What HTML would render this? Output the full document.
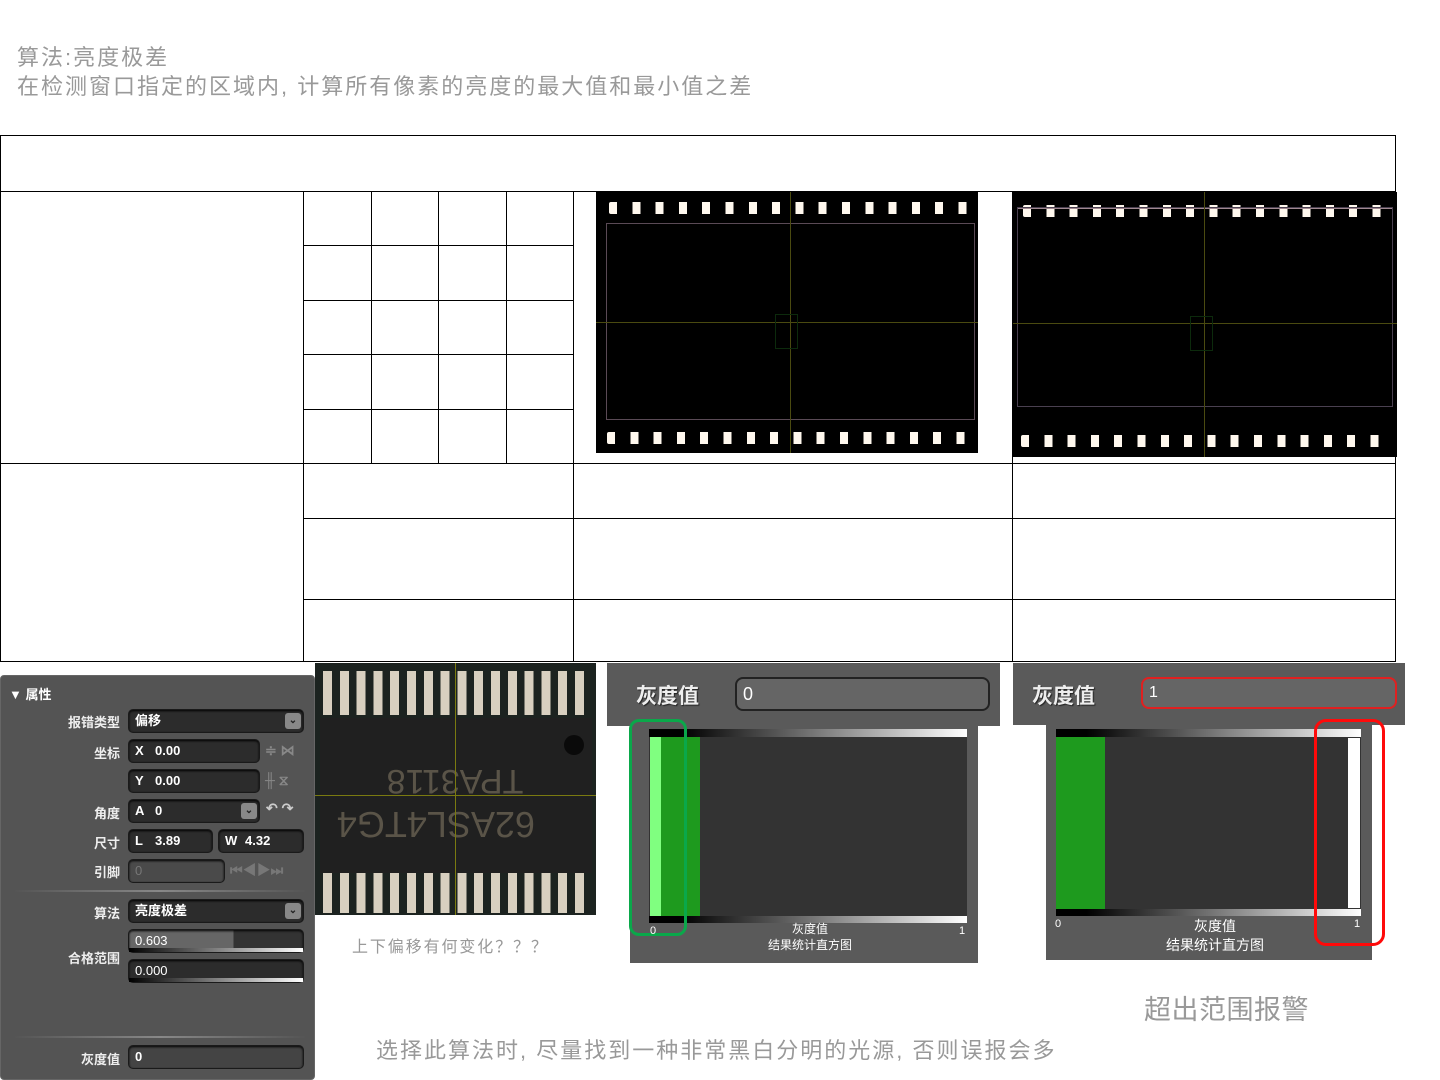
<!DOCTYPE html>
<html><head><meta charset="utf-8"><style>
*{margin:0;padding:0;box-sizing:border-box}
body{width:1440px;height:1080px;background:#fff;position:relative;overflow:hidden;font-family:"Liberation Sans","Noto Sans CJK SC",sans-serif}
.a{position:absolute}
.h{position:absolute;height:1px;background:#000}
.v{position:absolute;width:1px;background:#000}
.holes{position:absolute;height:12px;background:repeating-linear-gradient(90deg,#fff8ee 0 8px,transparent 8px 23.3px);border-radius:2px}
.lbl{position:absolute;right:1320px;color:#eee;font-size:13px;font-weight:bold;text-align:right;width:100px}
.fld{position:absolute;background:#2c2c2c;border:1px solid #1a1a1a;border-radius:5px;color:#fff;font-size:13px;font-weight:bold;height:24px;line-height:22px;padding-left:6px;box-shadow:inset 0 1px 2px #000}
.pre{display:inline-block;width:20px;color:#fff}
.dd{position:absolute;right:2px;top:3px;width:16px;height:16px;background:#888;border-radius:3px;color:#222;font-size:10px;line-height:16px;text-align:center}
.ico{position:absolute;color:#888;font-size:14px;font-weight:bold}
</style></head><body>
<div class="a" style="left:17px;top:43px;color:#999;font-size:22px;line-height:29px;letter-spacing:2px">算法:亮度极差<br>在检测窗口指定的区域内, 计算所有像素的亮度的最大值和最小值之差</div>

<!-- table -->
<div class="h" style="left:0;top:135px;width:1396px"></div>
<div class="h" style="left:0;top:191px;width:1396px"></div>
<div class="h" style="left:0;top:463px;width:1396px"></div>
<div class="h" style="left:303px;top:518px;width:1093px"></div>
<div class="h" style="left:303px;top:599px;width:1093px"></div>
<div class="h" style="left:0;top:661px;width:1396px"></div>
<div class="h" style="left:303px;top:245px;width:270px"></div>
<div class="h" style="left:303px;top:300px;width:270px"></div>
<div class="h" style="left:303px;top:354px;width:270px"></div>
<div class="h" style="left:303px;top:409px;width:270px"></div>
<div class="v" style="left:0;top:135px;height:527px"></div>
<div class="v" style="left:1395px;top:135px;height:527px"></div>
<div class="v" style="left:303px;top:191px;height:471px"></div>
<div class="v" style="left:371px;top:191px;height:272px"></div>
<div class="v" style="left:438px;top:191px;height:272px"></div>
<div class="v" style="left:506px;top:191px;height:272px"></div>
<div class="v" style="left:573px;top:191px;height:471px"></div>
<div class="v" style="left:1012px;top:191px;height:471px"></div>

<!-- film left -->
<div class="a" style="left:596px;top:192px;width:382px;height:261px;background:#000">
 <div class="holes" style="left:13px;top:10px;width:366px"></div>
 <div class="holes" style="left:11px;top:240px;width:366px"></div>
 <div class="a" style="left:10px;top:31px;width:369px;height:197px;border:1px solid #5a4a55"></div>
 <div class="a" style="left:194px;top:0;width:1px;height:261px;background:#4a4a10"></div>
 <div class="a" style="left:0;top:130px;width:382px;height:1px;background:#4a4a10"></div>
 <div class="a" style="left:179px;top:122px;width:23px;height:35px;border:1px solid #0c2a0c"></div>
</div>
<!-- film right -->
<div class="a" style="left:1013px;top:192px;width:384px;height:265px;background:#000">
 <div class="holes" style="left:10px;top:13px;width:370px"></div>
 <div class="a" style="left:4px;top:15px;width:376px;height:2px;background:#a08890"></div>
 <div class="holes" style="left:8px;top:243px;width:370px"></div>
 <div class="a" style="left:4px;top:15px;width:376px;height:200px;border:1px solid #4a4050"></div>
 <div class="a" style="left:191px;top:0;width:1px;height:265px;background:#4a4a10"></div>
 <div class="a" style="left:0;top:131px;width:384px;height:1px;background:#4a4a10"></div>
 <div class="a" style="left:177px;top:124px;width:23px;height:35px;border:1px solid #0c2a0c"></div>
</div>

<!-- properties panel -->
<div class="a" style="left:0;top:675px;width:315px;height:405px;background:#545454;border:1px solid #666;border-radius:4px"></div>
<div class="a" style="left:9px;top:684px;color:#fff;font-size:13px;font-weight:bold">▼ 属性</div>
<div class="lbl" style="top:712px">报错类型</div>
<div class="fld" style="left:128px;top:709px;width:176px">偏移<span class="dd">⌄</span></div>
<div class="lbl" style="top:743px">坐标</div>
<div class="fld" style="left:128px;top:739px;width:132px"><span class="pre">X</span>0.00</div>
<div class="ico" style="left:265px;top:742px">≑ ⋈</div>
<div class="fld" style="left:128px;top:769px;width:132px"><span class="pre">Y</span>0.00</div>
<div class="ico" style="left:265px;top:772px">╫ ⧖</div>
<div class="lbl" style="top:803px">角度</div>
<div class="fld" style="left:128px;top:799px;width:132px"><span class="pre">A</span>0<span class="dd">⌄</span></div>
<div class="ico" style="left:266px;top:800px;color:#ccc">↶ ↷</div>
<div class="lbl" style="top:833px">尺寸</div>
<div class="fld" style="left:128px;top:829px;width:85px"><span class="pre">L</span>3.89</div>
<div class="fld" style="left:218px;top:829px;width:86px"><span class="pre">W</span>4.32</div>
<div class="lbl" style="top:862px">引脚</div>
<div class="fld" style="left:128px;top:859px;width:97px;background:#4a4a4a;color:#777;font-weight:normal">0</div>
<div class="ico" style="left:230px;top:860px;color:#777">⏮◀▶⏭</div>
<div class="a" style="left:15px;top:890px;width:290px;height:2px;background:linear-gradient(90deg,#555,#888,#555)"></div>
<div class="lbl" style="top:903px">算法</div>
<div class="fld" style="left:128px;top:899px;width:176px">亮度极差<span class="dd">⌄</span></div>
<div class="lbl" style="top:948px">合格范围</div>
<div class="fld" style="left:128px;top:929px;width:176px;font-weight:normal;background:linear-gradient(90deg,#666 0 60%,#333 60%)">0.603</div>
<div class="a" style="left:129px;top:948px;width:174px;height:4px;background:linear-gradient(90deg,#000,#fff)"></div>
<div class="fld" style="left:128px;top:959px;width:176px;font-weight:normal">0.000</div>
<div class="a" style="left:129px;top:978px;width:174px;height:4px;background:linear-gradient(90deg,#000,#fff)"></div>
<div class="a" style="left:15px;top:1036px;width:290px;height:2px;background:linear-gradient(90deg,#555,#888,#555)"></div>
<div class="lbl" style="top:1049px">灰度值</div>
<div class="fld" style="left:128px;top:1045px;width:176px;background:#444">0</div>

<!-- chip -->
<div class="a" style="left:315px;top:663px;width:281px;height:252px;background:#1c2320;overflow:hidden">
 <div class="a" style="left:8px;top:8px;width:268px;height:44px;background:repeating-linear-gradient(90deg,#d8d0c0 0 9px,transparent 9px 16.8px)"></div>
 <div class="a" style="left:8px;top:210px;width:268px;height:40px;background:repeating-linear-gradient(90deg,#d8d0c0 0 9px,transparent 9px 16.8px)"></div>
 <div class="a" style="left:5px;top:55px;width:272px;height:155px;background:#202020"></div>
 <div class="a" style="left:249px;top:72px;width:20px;height:20px;border-radius:50%;background:#0a0a0a"></div>
 <div class="a" style="left:50px;top:100px;color:#5a5448;font-size:34px;transform:rotate(180deg);line-height:36px;text-align:center;width:180px">TPA3118</div>
 <div class="a" style="left:10px;top:142px;color:#5a5448;font-size:36px;transform:rotate(180deg);line-height:38px;width:210px">62ASL4TG4</div>
 <div class="a" style="left:140px;top:0;width:1px;height:252px;background:#7a7a10"></div>
 <div class="a" style="left:0;top:132px;width:281px;height:1px;background:#7a7a10"></div>
</div>
<div class="a" style="left:352px;top:933px;color:#999;font-size:16px;letter-spacing:1.9px">上下偏移有何变化？？？</div>

<!-- hist left -->
<div class="a" style="left:607px;top:663px;width:393px;height:63px;background:#5a5a5a"></div>
<div class="a" style="left:636px;top:680px;color:#eee;font-size:21px;font-weight:bold;text-shadow:1px 1px 1px #222">灰度值</div>
<div class="a" style="left:735px;top:677px;width:255px;height:34px;background:#656565;border:2px solid #222;border-radius:8px;color:#fff;font-size:18px;padding-left:6px;line-height:30px">0</div>
<div class="a" style="left:630px;top:726px;width:348px;height:237px;background:#5a5a5a"></div>
<div class="a" style="left:649px;top:729px;width:318px;height:8px;background:linear-gradient(90deg,#000 10%,#fff)"></div>
<div class="a" style="left:649px;top:737px;width:318px;height:179px;background:#333"></div>
<div class="a" style="left:649px;top:916px;width:318px;height:7px;background:linear-gradient(90deg,#000 10%,#fff)"></div>
<div class="a" style="left:650px;top:737px;width:11px;height:179px;background:#80ff80"></div>
<div class="a" style="left:661px;top:737px;width:39px;height:179px;background:#1e9a1e"></div>
<div class="a" style="left:629px;top:719px;width:58px;height:217px;border:3px solid #0aa84a;border-radius:10px"></div>
<div class="a" style="left:650px;top:925px;color:#fff;font-size:11px">0</div>
<div class="a" style="left:959px;top:925px;color:#fff;font-size:11px">1</div>
<div class="a" style="left:740px;top:921px;width:140px;text-align:center;color:#fff;font-size:12px;line-height:16px">灰度值<br>结果统计直方图</div>

<!-- hist right -->
<div class="a" style="left:1013px;top:663px;width:392px;height:62px;background:#5a5a5a"></div>
<div class="a" style="left:1032px;top:680px;color:#eee;font-size:21px;font-weight:bold;text-shadow:1px 1px 1px #222">灰度值</div>
<div class="a" style="left:1141px;top:677px;width:256px;height:32px;background:#656565;border:2px solid #e02020;border-radius:8px;color:#fff;font-size:16px;padding-left:6px;line-height:28px">1</div>
<div class="a" style="left:1046px;top:725px;width:326px;height:235px;background:#5a5a5a"></div>
<div class="a" style="left:1056px;top:729px;width:305px;height:8px;background:linear-gradient(90deg,#000 10%,#fff)"></div>
<div class="a" style="left:1056px;top:737px;width:305px;height:172px;background:#333"></div>
<div class="a" style="left:1056px;top:909px;width:305px;height:7px;background:linear-gradient(90deg,#000 10%,#fff)"></div>
<div class="a" style="left:1056px;top:737px;width:49px;height:172px;background:#1e9a1e"></div>
<div class="a" style="left:1348px;top:738px;width:12px;height:170px;background:#fff"></div>
<div class="a" style="left:1314px;top:719px;width:71px;height:227px;border:3px solid #ff0a0a;border-radius:12px"></div>
<div class="a" style="left:1055px;top:918px;color:#fff;font-size:11px">0</div>
<div class="a" style="left:1354px;top:918px;color:#fff;font-size:11px">1</div>
<div class="a" style="left:1145px;top:917px;width:140px;text-align:center;color:#fff;font-size:14px;line-height:19px">灰度值<br>结果统计直方图</div>

<div class="a" style="left:1144px;top:988px;color:#999;font-size:27px;letter-spacing:0.5px">超出范围报警</div>
<div class="a" style="left:376px;top:1033px;color:#999;font-size:22px;letter-spacing:2px">选择此算法时, 尽量找到一种非常黑白分明的光源, 否则误报会多</div>
</body></html>
